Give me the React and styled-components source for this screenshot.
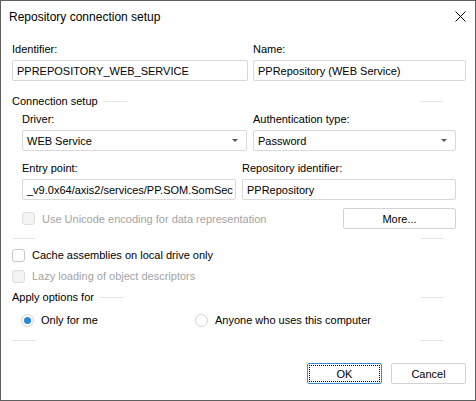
import React from "react";
import styled, { createGlobalStyle } from "styled-components";

const GlobalStyle = createGlobalStyle`
  body {
    margin: 0;
    background: #ffffff;
    font-family: "Liberation Sans", Arial, sans-serif;
    font-size: 11px;
    color: #000;
  }
`;

const Window = styled.div`
  width: 476px;
  height: 401px;
  box-sizing: border-box;
  border: 1px solid #5f5f5f;
  background: #fff;
  display: flex;
  flex-direction: column;
`;

const TitleBar = styled.div`
  height: 32px;
  display: flex;
  align-items: center;
  justify-content: space-between;
  padding: 0 8px 0 8px;
  font-size: 12px;
  color: #000;
`;

const CloseIcon = styled.svg`
  width: 11px;
  height: 11px;
  margin-top: -2px;
  margin-right: 1px;
`;

const Body = styled.div`
  padding: 8px 9px 0 11px;
  display: flex;
  flex-direction: column;
`;

const FieldGrid = styled.div`
  display: grid;
  grid-template-columns: ${(p) => p.cols};
  column-gap: ${(p) => p.gap}px;
  margin-top: ${(p) => p.top || 0}px;
`;

const Field = styled.div`
  display: flex;
  flex-direction: column;
`;

const Label = styled.div`
  line-height: 16px;
  height: 16px;
  margin-bottom: 3px;
  white-space: nowrap;
`;

const TextBox = styled.div`
  height: 21px;
  box-sizing: border-box;
  border: 1px solid #d9d9d9;
  border-radius: 2px;
  padding: 0 4px;
  display: flex;
  align-items: center;
  justify-content: space-between;
  white-space: nowrap;
  overflow: hidden;
`;

const Arrow = styled.span`
  width: 0;
  height: 0;
  border-left: 3px solid transparent;
  border-right: 3px solid transparent;
  border-top: 3px solid #5a5a5a;
  margin-right: 4px;
`;

const Header = styled.div`
  display: flex;
  align-items: center;
  height: 16px;
  line-height: 16px;
  margin-top: ${(p) => p.top || 0}px;
`;

const Line = styled.div`
  height: 1px;
  width: ${(p) => p.w || 24}px;
  background: #e6e6e6;
  margin-left: ${(p) => p.left || 0}px;
  margin-right: ${(p) => p.right || 0}px;
`;

const Spacer = styled.div`
  flex: 1;
`;

const Separator = styled.div`
  display: flex;
  height: 1px;
  margin-top: ${(p) => p.top || 0}px;
`;

const Group = styled.div`
  padding-left: ${(p) => p.indent || 10}px;
  display: flex;
  flex-direction: column;
`;

const OptionRow = styled.div`
  display: flex;
  align-items: center;
  justify-content: space-between;
  height: ${(p) => p.h || 16}px;
  margin-top: ${(p) => p.top || 0}px;
`;

const Check = styled.label`
  display: flex;
  align-items: center;
  gap: 7px;
  color: ${(p) => (p.disabled ? "#a3a3a3" : "#000")};
  white-space: nowrap;
`;

const Box = styled.span`
  width: 13px;
  height: 13px;
  box-sizing: border-box;
  border: 1px solid ${(p) => (p.disabled ? "#dedede" : "#c6c6c6")};
  background: ${(p) => (p.disabled ? "#f3f3f3" : "#fff")};
  border-radius: 3px;
`;

const RadioGrid = styled.div`
  display: grid;
  grid-template-columns: 174px auto;
  height: 16px;
  align-items: center;
  margin-top: 7px;
  padding-left: 9px;
`;

const RadioCircle = styled.span`
  width: 13px;
  height: 13px;
  box-sizing: border-box;
  border: 1px solid #d2d2d2;
  border-radius: 50%;
  display: flex;
  align-items: center;
  justify-content: center;

  &::after {
    content: "";
    display: ${(p) => (p.checked ? "block" : "none")};
    width: 7px;
    height: 7px;
    border-radius: 50%;
    background: #2a87d6;
  }
`;

const Button = styled.div`
  width: ${(p) => p.w || 75}px;
  height: 21px;
  box-sizing: border-box;
  border: 1px solid ${(p) => (p.primary ? "#3b8ad0" : "#d3d3d3")};
  border-radius: 2px;
  display: flex;
  align-items: center;
  justify-content: center;
  position: relative;

  &::before {
    content: "";
    display: ${(p) => (p.primary ? "block" : "none")};
    position: absolute;
    inset: 1px;
    border: 1px dotted #000;
  }
`;

const Footer = styled.div`
  display: flex;
  justify-content: flex-end;
  gap: 9px;
  margin-top: 22px;
`;

function SideLines({ children, leftLine = true }) {
  return (
    <>
      {children}
      {leftLine && <Line w={24} left={children ? 5 : 0} />}
      <Spacer />
      <Line w={23} right={23} />
    </>
  );
}

export default function App() {
  return (
    <>
      <GlobalStyle />
      <Window>
        <TitleBar>
          <span>Repository connection setup</span>
          <CloseIcon viewBox="0 0 11 11">
            <path d="M0.5 0.5 L10.5 10.5 M10.5 0.5 L0.5 10.5" stroke="#000" strokeWidth="1" fill="none" />
          </CloseIcon>
        </TitleBar>
        <Body>
          <FieldGrid cols="236px 213px" gap={5}>
            <Field>
              <Label>Identifier:</Label>
              <TextBox>PPREPOSITORY_WEB_SERVICE</TextBox>
            </Field>
            <Field>
              <Label>Name:</Label>
              <TextBox>PPRepository (WEB Service)</TextBox>
            </Field>
          </FieldGrid>

          <Header top={12}>
            <SideLines>
              <span>Connection setup</span>
            </SideLines>
          </Header>

          <Group>
            <FieldGrid cols="225px 203px" gap={6} top={2}>
              <Field>
                <Label>Driver:</Label>
                <TextBox>
                  WEB Service
                  <Arrow />
                </TextBox>
              </Field>
              <Field>
                <Label>Authentication type:</Label>
                <TextBox>
                  Password
                  <Arrow />
                </TextBox>
              </Field>
            </FieldGrid>

            <FieldGrid cols="214px 214px" gap={6} top={9}>
              <Field>
                <Label>Entry point:</Label>
                <TextBox>_v9.0x64/axis2/services/PP.SOM.SomSec</TextBox>
              </Field>
              <Field>
                <Label>Repository identifier:</Label>
                <TextBox>PPRepository</TextBox>
              </Field>
            </FieldGrid>

            <OptionRow h={21} top={8}>
              <Check disabled>
                <Box disabled />
                Use Unicode encoding for data representation
              </Check>
              <Button w={113} style={{ marginRight: 10 }}>More...</Button>
            </OptionRow>
          </Group>

          <Separator top={9}>
            <SideLines />
          </Separator>

          <OptionRow top={8}>
            <Check>
              <Box />
              Cache assemblies on local drive only
            </Check>
          </OptionRow>
          <OptionRow top={5}>
            <Check disabled>
              <Box disabled />
              Lazy loading of object descriptors
            </Check>
          </OptionRow>

          <Header top={5}>
            <SideLines>
              <span>Apply options for</span>
            </SideLines>
          </Header>

          <RadioGrid>
            <Check>
              <RadioCircle checked />
              Only for me
            </Check>
            <Check>
              <RadioCircle />
              Anyone who uses this computer
            </Check>
          </RadioGrid>

          <Separator top={12}>
            <SideLines />
          </Separator>

          <Footer>
            <Button primary>OK</Button>
            <Button>Cancel</Button>
          </Footer>
        </Body>
      </Window>
    </>
  );
}
